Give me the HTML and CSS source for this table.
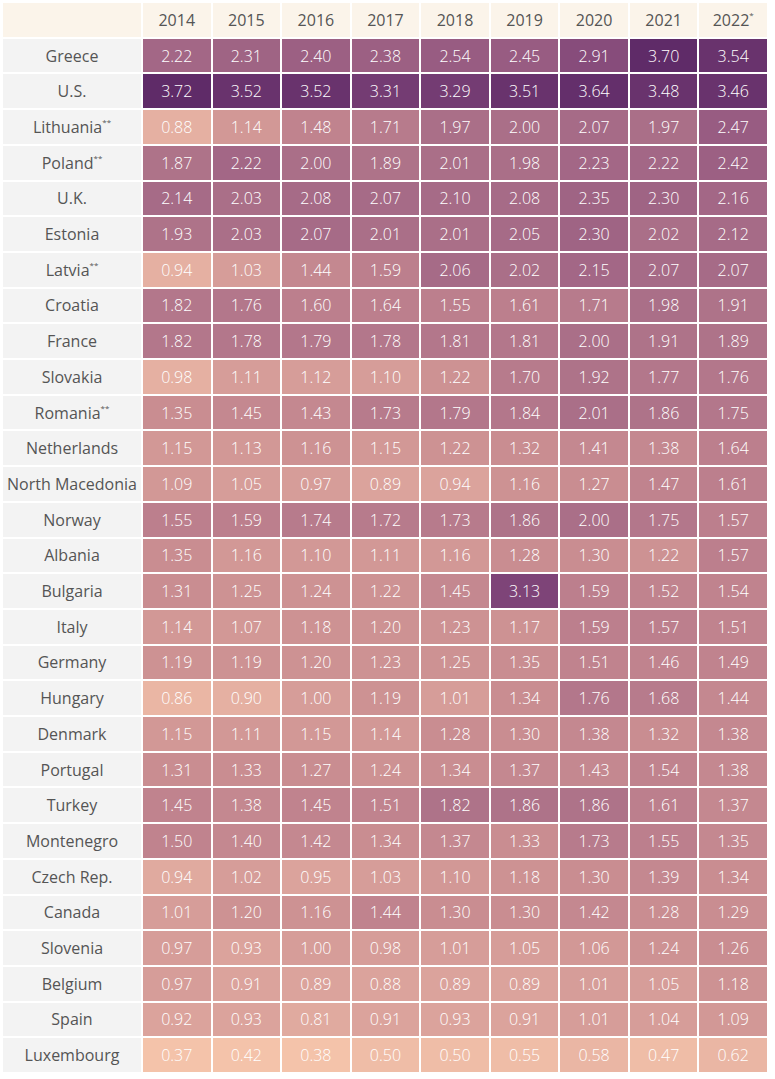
FILE: index.html
```html
<!DOCTYPE html>
<html lang="en">
<head>
<meta charset="utf-8">
<title>Defence expenditure as % of GDP</title>
<link rel="stylesheet" href="styles.css">
</head>
<body>
<div class="table">
  <div class="row head"><div class="lbl"></div><div>2014</div><div>2015</div><div>2016</div><div>2017</div><div>2018</div><div>2019</div><div>2020</div><div>2021</div><div>2022<sup>*</sup></div></div>
  <div class="row"><div class="lbl">Greece</div><div class="v22">2.22</div><div class="v23">2.31</div><div class="v24">2.40</div><div class="v24">2.38</div><div class="v25">2.54</div><div class="v25">2.45</div><div class="v29">2.91</div><div class="v37">3.70</div><div class="v35">3.54</div></div>
  <div class="row"><div class="lbl">U.S.</div><div class="v37">3.72</div><div class="v35">3.52</div><div class="v35">3.52</div><div class="v33">3.31</div><div class="v33">3.29</div><div class="v35">3.51</div><div class="v36">3.64</div><div class="v35">3.48</div><div class="v35">3.46</div></div>
  <div class="row"><div class="lbl">Lithuania<sup>**</sup></div><div class="v7">0.88</div><div class="v11">1.14</div><div class="v15">1.48</div><div class="v17">1.71</div><div class="v20">1.97</div><div class="v20">2.00</div><div class="v21">2.07</div><div class="v20">1.97</div><div class="v25">2.47</div></div>
  <div class="row"><div class="lbl">Poland<sup>**</sup></div><div class="v19">1.87</div><div class="v22">2.22</div><div class="v20">2.00</div><div class="v19">1.89</div><div class="v20">2.01</div><div class="v20">1.98</div><div class="v22">2.23</div><div class="v22">2.22</div><div class="v24">2.42</div></div>
  <div class="row"><div class="lbl">U.K.</div><div class="v21">2.14</div><div class="v20">2.03</div><div class="v21">2.08</div><div class="v21">2.07</div><div class="v21">2.10</div><div class="v21">2.08</div><div class="v23">2.35</div><div class="v23">2.30</div><div class="v22">2.16</div></div>
  <div class="row"><div class="lbl">Estonia</div><div class="v19">1.93</div><div class="v20">2.03</div><div class="v21">2.07</div><div class="v20">2.01</div><div class="v20">2.01</div><div class="v21">2.05</div><div class="v23">2.30</div><div class="v20">2.02</div><div class="v21">2.12</div></div>
  <div class="row"><div class="lbl">Latvia<sup>**</sup></div><div class="v7">0.94</div><div class="v10">1.03</div><div class="v14">1.44</div><div class="v16">1.59</div><div class="v21">2.06</div><div class="v20">2.02</div><div class="v22">2.15</div><div class="v21">2.07</div><div class="v21">2.07</div></div>
  <div class="row"><div class="lbl">Croatia</div><div class="v18">1.82</div><div class="v18">1.76</div><div class="v16">1.60</div><div class="v16">1.64</div><div class="v16">1.55</div><div class="v16">1.61</div><div class="v17">1.71</div><div class="v20">1.98</div><div class="v19">1.91</div></div>
  <div class="row"><div class="lbl">France</div><div class="v18">1.82</div><div class="v18">1.78</div><div class="v18">1.79</div><div class="v18">1.78</div><div class="v18">1.81</div><div class="v18">1.81</div><div class="v20">2.00</div><div class="v19">1.91</div><div class="v19">1.89</div></div>
  <div class="row"><div class="lbl">Slovakia</div><div class="v7">0.98</div><div class="v10">1.11</div><div class="v10">1.12</div><div class="v10">1.10</div><div class="v12">1.22</div><div class="v17">1.70</div><div class="v19">1.92</div><div class="v18">1.77</div><div class="v18">1.76</div></div>
  <div class="row"><div class="lbl">Romania<sup>**</sup></div><div class="v13">1.35</div><div class="v14">1.45</div><div class="v14">1.43</div><div class="v17">1.73</div><div class="v18">1.79</div><div class="v18">1.84</div><div class="v20">2.01</div><div class="v19">1.86</div><div class="v18">1.75</div></div>
  <div class="row"><div class="lbl">Netherlands</div><div class="v11">1.15</div><div class="v11">1.13</div><div class="v12">1.16</div><div class="v11">1.15</div><div class="v12">1.22</div><div class="v13">1.32</div><div class="v14">1.41</div><div class="v14">1.38</div><div class="v16">1.64</div></div>
  <div class="row"><div class="lbl">North Macedonia</div><div class="v11">1.09</div><div class="v10">1.05</div><div class="v10">0.97</div><div class="v9">0.89</div><div class="v9">0.94</div><div class="v12">1.16</div><div class="v13">1.27</div><div class="v15">1.47</div><div class="v16">1.61</div></div>
  <div class="row"><div class="lbl">Norway</div><div class="v16">1.55</div><div class="v16">1.59</div><div class="v17">1.74</div><div class="v17">1.72</div><div class="v17">1.73</div><div class="v19">1.86</div><div class="v20">2.00</div><div class="v18">1.75</div><div class="v16">1.57</div></div>
  <div class="row"><div class="lbl">Albania</div><div class="v13">1.35</div><div class="v11">1.16</div><div class="v11">1.10</div><div class="v11">1.11</div><div class="v11">1.16</div><div class="v13">1.28</div><div class="v13">1.30</div><div class="v12">1.22</div><div class="v16">1.57</div></div>
  <div class="row"><div class="lbl">Bulgaria</div><div class="v13">1.31</div><div class="v12">1.25</div><div class="v12">1.24</div><div class="v12">1.22</div><div class="v14">1.45</div><div class="v31">3.13</div><div class="v16">1.59</div><div class="v15">1.52</div><div class="v15">1.54</div></div>
  <div class="row"><div class="lbl">Italy</div><div class="v11">1.14</div><div class="v11">1.07</div><div class="v12">1.18</div><div class="v12">1.20</div><div class="v12">1.23</div><div class="v12">1.17</div><div class="v16">1.59</div><div class="v16">1.57</div><div class="v15">1.51</div></div>
  <div class="row"><div class="lbl">Germany</div><div class="v12">1.19</div><div class="v12">1.19</div><div class="v12">1.20</div><div class="v12">1.23</div><div class="v12">1.25</div><div class="v13">1.35</div><div class="v15">1.51</div><div class="v15">1.46</div><div class="v15">1.49</div></div>
  <div class="row"><div class="lbl">Hungary</div><div class="v6">0.86</div><div class="v7">0.90</div><div class="v10">1.00</div><div class="v12">1.19</div><div class="v10">1.01</div><div class="v13">1.34</div><div class="v18">1.76</div><div class="v17">1.68</div><div class="v14">1.44</div></div>
  <div class="row"><div class="lbl">Denmark</div><div class="v11">1.15</div><div class="v11">1.11</div><div class="v11">1.15</div><div class="v11">1.14</div><div class="v13">1.28</div><div class="v13">1.30</div><div class="v14">1.38</div><div class="v13">1.32</div><div class="v14">1.38</div></div>
  <div class="row"><div class="lbl">Portugal</div><div class="v13">1.31</div><div class="v13">1.33</div><div class="v13">1.27</div><div class="v12">1.24</div><div class="v13">1.34</div><div class="v14">1.37</div><div class="v14">1.43</div><div class="v15">1.54</div><div class="v14">1.38</div></div>
  <div class="row"><div class="lbl">Turkey</div><div class="v15">1.45</div><div class="v14">1.38</div><div class="v15">1.45</div><div class="v15">1.51</div><div class="v19">1.82</div><div class="v19">1.86</div><div class="v19">1.86</div><div class="v16">1.61</div><div class="v14">1.37</div></div>
  <div class="row"><div class="lbl">Montenegro</div><div class="v15">1.50</div><div class="v14">1.40</div><div class="v14">1.42</div><div class="v13">1.34</div><div class="v14">1.37</div><div class="v13">1.33</div><div class="v17">1.73</div><div class="v16">1.55</div><div class="v14">1.35</div></div>
  <div class="row"><div class="lbl">Czech Rep.</div><div class="v8">0.94</div><div class="v10">1.02</div><div class="v9">0.95</div><div class="v10">1.03</div><div class="v11">1.10</div><div class="v12">1.18</div><div class="v13">1.30</div><div class="v14">1.39</div><div class="v13">1.34</div></div>
  <div class="row"><div class="lbl">Canada</div><div class="v10">1.01</div><div class="v12">1.20</div><div class="v12">1.16</div><div class="v15">1.44</div><div class="v13">1.30</div><div class="v13">1.30</div><div class="v14">1.42</div><div class="v13">1.28</div><div class="v13">1.29</div></div>
  <div class="row"><div class="lbl">Slovenia</div><div class="v10">0.97</div><div class="v9">0.93</div><div class="v10">1.00</div><div class="v10">0.98</div><div class="v10">1.01</div><div class="v10">1.05</div><div class="v11">1.06</div><div class="v12">1.24</div><div class="v13">1.26</div></div>
  <div class="row"><div class="lbl">Belgium</div><div class="v10">0.97</div><div class="v9">0.91</div><div class="v9">0.89</div><div class="v9">0.88</div><div class="v9">0.89</div><div class="v9">0.89</div><div class="v10">1.01</div><div class="v10">1.05</div><div class="v12">1.18</div></div>
  <div class="row"><div class="lbl">Spain</div><div class="v9">0.92</div><div class="v9">0.93</div><div class="v8">0.81</div><div class="v9">0.91</div><div class="v9">0.93</div><div class="v9">0.91</div><div class="v10">1.01</div><div class="v10">1.04</div><div class="v11">1.09</div></div>
  <div class="row"><div class="lbl">Luxembourg</div><div class="v4">0.37</div><div class="v4">0.42</div><div class="v4">0.38</div><div class="v5">0.50</div><div class="v5">0.50</div><div class="v5">0.55</div><div class="v6">0.58</div><div class="v5">0.47</div><div class="v6">0.62</div></div>
</div>
</body>
</html>
```

FILE: styles.css
```css
html, body {
  margin: 0;
  padding: 0;
  background: #ffffff;
}

.table {
  margin: 3px 0 0 3px;
  width: 764px;
  height: 1069px;
  display: grid;
  grid-template-columns: 138px repeat(9, 1fr);
  grid-template-rows: repeat(30, 1fr);
  gap: 2px;
  font-family: "Open Sans", "Liberation Sans", sans-serif;
  font-size: 16px;
  font-weight: 300;
}

.row {
  display: contents;
}

.row > div {
  display: flex;
  align-items: center;
  justify-content: center;
  color: #ffffff;
  white-space: nowrap;
}

.row .lbl {
  background: #f3f3f3;
  color: #555555;
  font-weight: 400;
}

.head > div {
  background: #fbf4ea;
  color: #555555;
  font-weight: 400;
}

.head .lbl {
  background: #fbf4ea;
}

sup {
  font-size: 8px;
  line-height: 0;
  align-self: flex-start;
  margin-top: 12px;
}

.v4 { background: #f4c3aa; }
.v5 { background: #efbda7; }
.v6 { background: #eab6a4; }
.v7 { background: #e5b0a2; }
.v8 { background: #e0aa9f; }
.v9 { background: #dba39c; }
.v10 { background: #d69d99; }
.v11 { background: #d29896; }
.v12 { background: #cd9293; }
.v13 { background: #c98d91; }
.v14 { background: #c48890; }
.v15 { background: #c0838e; }
.v16 { background: #bc7f8d; }
.v17 { background: #b77b8c; }
.v18 { background: #b3778b; }
.v19 { background: #ae7389; }
.v20 { background: #aa6f88; }
.v21 { background: #a66b87; }
.v22 { background: #a36786; }
.v23 { background: #9f6484; }
.v24 { background: #9c6083; }
.v25 { background: #985c82; }
.v26 { background: #945880; }
.v27 { background: #8f547f; }
.v28 { background: #8b507d; }
.v29 { background: #874c7b; }
.v30 { background: #82487a; }
.v31 { background: #7e4478; }
.v32 { background: #794075; }
.v33 { background: #743c73; }
.v34 { background: #6e3870; }
.v35 { background: #69336d; }
.v36 { background: #642f6b; }
.v37 { background: #5f2b68; }
```
